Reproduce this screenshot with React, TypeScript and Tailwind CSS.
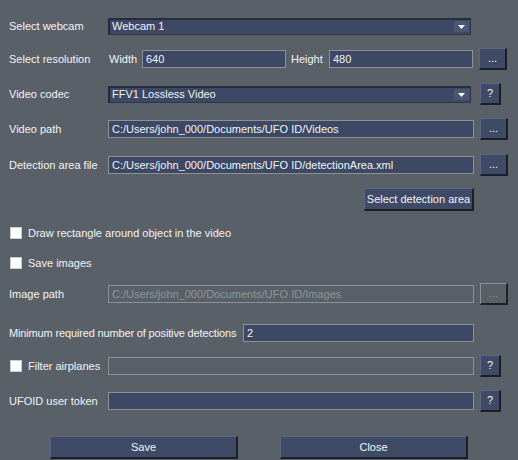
import React from 'react';

const font = { fontFamily: '"Liberation Sans", Arial, sans-serif' };

function Label({ children, w = 'w-[99px]' }: { children: React.ReactNode; w?: string }) {
  return <div className={`${w} shrink-0 whitespace-nowrap text-[11px] text-[#f2f4f6]`}>{children}</div>;
}

function TextBox({ value, className = '', disabled = false }: { value: string; className?: string; disabled?: boolean }) {
  return (
    <div
      className={`h-[18px] flex items-center px-[3px] border border-[#8c9297] text-[11px] whitespace-nowrap overflow-hidden ${
        disabled ? 'bg-transparent text-[#8f969d]' : 'bg-[#3c4864] text-[#f2f4f6]'
      } ${className}`}
    >
      {value}
    </div>
  );
}

function Combo({ value }: { value: string }) {
  return (
    <div className="w-[363px] h-[17px] flex items-center justify-between bg-[#3c4864] border-t-2 border-l-2 border-b border-r border-t-[#262c38] border-l-[#262c38] border-b-[#2f3646] border-r-[#2f3646] text-[11px] text-[#f2f4f6]">
      <span className="pl-[2px]">{value}</span>
      <div className="w-[15px] h-[11px] mr-[1px] bg-[#4a5672] flex items-center justify-center">
        <svg width="7" height="4" viewBox="0 0 7 4">
          <path d="M0 0h7L3.5 4z" fill="#ffffff" />
        </svg>
      </div>
    </div>
  );
}

function Btn({ children, className = '', disabled = false }: { children: React.ReactNode; className?: string; disabled?: boolean }) {
  return (
    <div
      className={`flex items-center justify-center whitespace-nowrap text-[11px] border-t border-l border-b-2 border-r-2 ${
        disabled
          ? 'bg-transparent text-[#8f969d] border-t-[#8c9297] border-l-[#8c9297] border-b-[#1e2228] border-r-[#1e2228]'
          : 'bg-[#3f4b66] text-[#f2f4f6] border-t-[#5c6680] border-l-[#5c6680] border-b-[#1b1f27] border-r-[#1b1f27]'
      } ${className}`}
    >
      {children}
    </div>
  );
}

function Check({ label }: { label: string }) {
  return (
    <div className="flex items-center whitespace-nowrap">
      <div className="ml-[1px] w-[12px] h-[12px] bg-white border border-[#c9ccd0]" />
      <span className="ml-[6px] text-[11px] text-[#f2f4f6]">{label}</span>
    </div>
  );
}

export default function App() {
  return (
    <div style={font} className="w-[518px] h-[460px] bg-[#596068] pl-[9px] pt-[15px] flex flex-col overflow-hidden">
      <div className="h-[22px] flex items-center">
        <Label>Select webcam</Label>
        <Combo value="Webcam 1" />
      </div>

      <div className="mt-[11px] h-[22px] flex items-center">
        <Label>Select resolution</Label>
        <span className="w-[34px] text-[11px] text-[#f2f4f6] pl-[1px]">Width</span>
        <TextBox value="640" className="w-[144px]" />
        <span className="w-[43px] pl-[5px] text-[11px] text-[#f2f4f6]">Height</span>
        <TextBox value="480" className="w-[144px]" />
        <Btn className="ml-[6px] w-[28px] h-[22px]">...</Btn>
      </div>

      <div className="mt-[13px] h-[22px] flex items-center">
        <Label>Video codec</Label>
        <Combo value="FFV1 Lossless Video" />
        <Btn className="ml-[9px] w-[21px] h-[22px]">?</Btn>
      </div>

      <div className="mt-[13px] h-[22px] flex items-center">
        <Label>Video path</Label>
        <TextBox value="C:/Users/john_000/Documents/UFO ID/Videos" className="w-[366px]" />
        <Btn className="ml-[6px] w-[28px] h-[22px]">...</Btn>
      </div>

      <div className="mt-[14px] h-[22px] flex items-center">
        <Label>Detection area file</Label>
        <TextBox value="C:/Users/john_000/Documents/UFO ID/detectionArea.xml" className="w-[366px]" />
        <Btn className="ml-[6px] w-[28px] h-[22px]">...</Btn>
      </div>

      <div className="mt-[12px] h-[23px] flex items-center">
        <div className="w-[355px]" />
        <Btn className="w-[110px] h-[23px]">Select detection area</Btn>
      </div>

      <div className="mt-[11px] h-[22px] flex items-center">
        <Check label="Draw rectangle around object in the video" />
      </div>

      <div className="mt-[8px] h-[22px] flex items-center">
        <Check label="Save images" />
      </div>

      <div className="mt-[9px] h-[22px] flex items-center">
        <Label>Image path</Label>
        <TextBox value="C:/Users/john_000/Documents/UFO ID/Images" className="w-[366px]" disabled />
        <Btn className="ml-[6px] w-[28px] h-[22px]" disabled>...</Btn>
      </div>

      <div className="mt-[17px] h-[22px] flex items-center">
        <div className="w-[234px] shrink-0 whitespace-nowrap text-[11px] tracking-[-0.15px] text-[#f2f4f6]">
          Minimum required number of positive detections
        </div>
        <TextBox value="2" className="w-[231px]" />
      </div>

      <div className="mt-[11px] h-[22px] flex items-center">
        <div className="w-[99px] shrink-0">
          <Check label="Filter airplanes" />
        </div>
        <TextBox value="" className="w-[366px]" disabled />
        <Btn className="ml-[6px] w-[21px] h-[22px]">?</Btn>
      </div>

      <div className="mt-[13px] h-[22px] flex items-center">
        <Label>UFOID user token</Label>
        <TextBox value="" className="w-[366px]" />
        <Btn className="ml-[6px] w-[21px] h-[22px]">?</Btn>
      </div>

      <div className="mt-[24px] h-[23px] flex items-center">
        <div className="w-[41px]" />
        <Btn className="w-[188px] h-[23px]">Save</Btn>
        <div className="w-[42px]" />
        <Btn className="w-[188px] h-[23px]">Close</Btn>
      </div>
    </div>
  );
}
